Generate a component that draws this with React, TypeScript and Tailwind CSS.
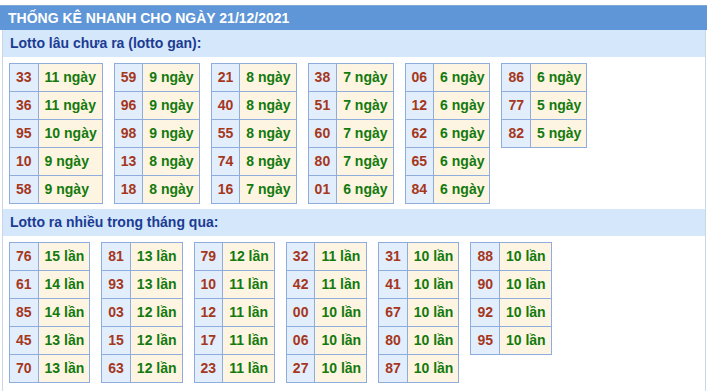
import React from "react";

type Entry = [string, string];

const gan: Entry[][] = [
  [["33", "11 ngày"], ["36", "11 ngày"], ["95", "10 ngày"], ["10", "9 ngày"], ["58", "9 ngày"]],
  [["59", "9 ngày"], ["96", "9 ngày"], ["98", "9 ngày"], ["13", "8 ngày"], ["18", "8 ngày"]],
  [["21", "8 ngày"], ["40", "8 ngày"], ["55", "8 ngày"], ["74", "8 ngày"], ["16", "7 ngày"]],
  [["38", "7 ngày"], ["51", "7 ngày"], ["60", "7 ngày"], ["80", "7 ngày"], ["01", "6 ngày"]],
  [["06", "6 ngày"], ["12", "6 ngày"], ["62", "6 ngày"], ["65", "6 ngày"], ["84", "6 ngày"]],
  [["86", "6 ngày"], ["77", "5 ngày"], ["82", "5 ngày"]],
];

const nhieu: Entry[][] = [
  [["76", "15 lần"], ["61", "14 lần"], ["85", "14 lần"], ["45", "13 lần"], ["70", "13 lần"]],
  [["81", "13 lần"], ["93", "13 lần"], ["03", "12 lần"], ["15", "12 lần"], ["63", "12 lần"]],
  [["79", "12 lần"], ["10", "11 lần"], ["12", "11 lần"], ["17", "11 lần"], ["23", "11 lần"]],
  [["32", "11 lần"], ["42", "11 lần"], ["00", "10 lần"], ["06", "10 lần"], ["27", "10 lần"]],
  [["31", "10 lần"], ["41", "10 lần"], ["67", "10 lần"], ["80", "10 lần"], ["87", "10 lần"]],
  [["88", "10 lần"], ["90", "10 lần"], ["92", "10 lần"], ["95", "10 lần"]],
];

function StatTable({ rows }: { rows: Entry[] }) {
  return (
    <div className="grid grid-cols-[auto_auto] self-start border-l border-t border-[#8eacdc]">
      {rows.map(([num, label], i) => (
        <React.Fragment key={i}>
          <div className="flex h-[28px] items-center justify-center border-b border-r border-[#8eacdc] bg-[#e2eefc] px-[6px] text-[#a5371c]">
            {num}
          </div>
          <div className="flex h-[28px] items-center border-b border-r border-[#8eacdc] bg-[#fef4e2] pl-[6px] pr-[5px] text-[#137a0d]">
            {label}
          </div>
        </React.Fragment>
      ))}
    </div>
  );
}

function Section({ title, tables }: { title: string; tables: Entry[][] }) {
  return (
    <div>
      <div className="flex h-[27px] items-center bg-[#d5e7fa] pl-[7px] text-[14px] font-bold text-[#1b3c93]">
        {title}
      </div>
      <div className="flex gap-x-[11px] pl-[6px] pt-[6px] pb-[5px] text-[14px] font-bold">
        {tables.map((t, i) => (
          <StatTable key={i} rows={t} />
        ))}
      </div>
    </div>
  );
}

export default function App() {
  return (
    <div
      className="flex h-[391px] w-[707px] flex-col bg-white pt-[5px]"
      style={{ fontFamily: '"Liberation Sans", Arial, sans-serif' }}
    >
      <div className="flex h-[25px] items-center border-t border-[#7ea6d6] bg-[#5e96d8] pl-[8px] text-[14px] font-bold text-white">
        THỐNG KÊ NHANH CHO NGÀY 21/12/2021
      </div>
      <div className="ml-[2px] mr-[1px] flex-1 border-x border-[#c9d6e6]">
        <Section title="Lotto lâu chưa ra (lotto gan):" tables={gan} />
        <Section title="Lotto ra nhiều trong tháng qua:" tables={nhieu} />
      </div>
    </div>
  );
}
